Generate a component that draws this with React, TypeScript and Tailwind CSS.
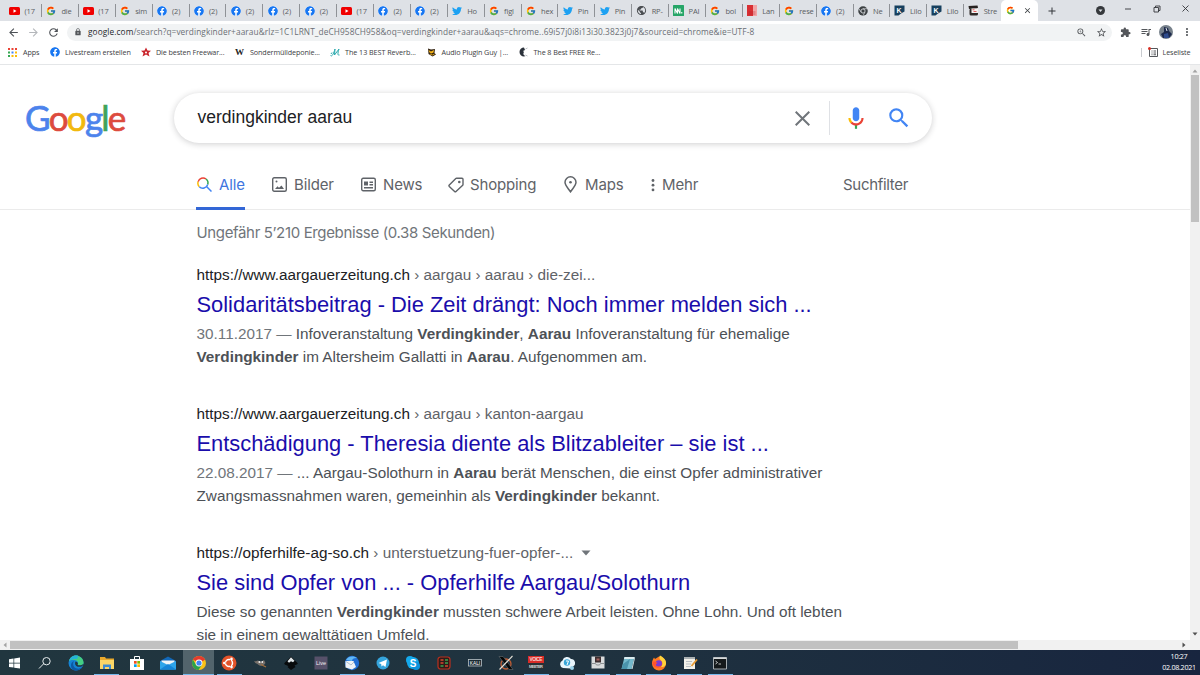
import React from "react";
import { FaFacebook, FaTwitter } from "react-icons/fa";
import { FcGoogle } from "react-icons/fc";
import {
  MdArrowBack,
  MdArrowForward,
  MdRefresh,
  MdLock,
  MdZoomIn,
  MdStarBorder,
  MdExtension,
  MdQueueMusic,
  MdMoreVert,
  MdClose,
  MdAdd,
  MdPublic,
} from "react-icons/md";

const Facebook = ({ size = 10 }: { size?: number }) => (
  <span className="flex rounded-full bg-white">
    <FaFacebook size={size} color="#1877f2" />
  </span>
);

const YouTube = () => (
  <svg width="11" height="8" viewBox="0 0 22 16">
    <rect width="22" height="16" rx="3" fill="#f00000" />
    <path d="M9 4.500v7l6-3.500z" fill="#fff" />
  </svg>
);

const MonoChrome = () => (
  <svg width="10" height="10" viewBox="0 0 20 20">
    <circle cx="10" cy="10" r="9.500" fill="#3c4043" />
    <circle cx="10" cy="10" r="4.200" fill="#3c4043" stroke="#e3e6ea" strokeWidth="1.600" />
    <path d="M10 5.500h8.500M6.200 12.500L2 5.500M13.800 12.500L10 19.500" stroke="#e3e6ea" strokeWidth="1.300" />
  </svg>
);

const KSite = () => (
  <svg width="11" height="11" viewBox="0 0 22 22">
    <path d="M1 1h20v12l-7 4-5 4H1z" fill="#17405e" />
    <text x="5" y="15" fontSize="14" fontWeight="700" fontFamily="Liberation Sans" fill="#fff">K</text>
  </svg>
);

const MSite = () => (
  <svg width="11" height="11" viewBox="0 0 22 22">
    <rect width="22" height="22" rx="1" fill="#26a567" />
    <path d="M4 17V7l5 10V7l5 10V7M17.500 14v3" stroke="#fff" strokeWidth="2.200" fill="none" />
  </svg>
);

const RedSite = () => (
  <svg width="10" height="11" viewBox="0 0 20 22">
    <rect width="12" height="22" fill="#d83034" />
    <rect x="12" width="8" height="22" fill="#f2a5a6" />
    <path d="M3 14h14M3 18h14" stroke="#b92328" strokeWidth="1" />
  </svg>
);

const StreamSite = () => (
  <svg width="11" height="11" viewBox="0 0 22 22">
    <path d="M1 2l18-1 1 5L2 8z" fill="#26211f" />
    <rect x="3" y="7" width="17" height="14" rx="3" fill="#302a28" />
    <rect x="7" y="7" width="13" height="9" fill="#f4f1f0" />
    <path d="M9 9.500h4M11 13h6" stroke="#d33" strokeWidth="1.500" />
  </svg>
);

const favicons: Record<string, React.ReactNode> = {
  yt: <YouTube />,
  g: <FcGoogle size={10} />,
  fb: <Facebook />,
  tw: <FaTwitter size={10} color="#1da1f2" />,
  web: <MdPublic size={11} color="#4a4d51" />,
  m: <MSite />,
  red: <RedSite />,
  chrome: <MonoChrome />,
  k: <KSite />,
  st: <StreamSite />,
};

const tabs: [string, string][] = [
  ["yt", "(17"], ["g", "die"], ["yt", "(17"], ["g", "sim"],
  ["fb", "(2)"], ["fb", "(2)"], ["fb", "(2)"], ["fb", "(2)"], ["fb", "(2)"],
  ["yt", "(17"], ["fb", "(2)"], ["fb", "(2)"], ["tw", "Ho"], ["g", "figl"],
  ["g", "hex"], ["tw", "Pin"], ["tw", "Pin"], ["web", "RP-"], ["m", "PAI"],
  ["g", "bol"], ["red", "Lan"], ["g", "rese"], ["fb", "(2)"], ["chrome", "Ne"],
  ["k", "Lilo"], ["k", "Lilo"], ["st", "Stre"],
];

function TabStrip() {
  return (
    <div className="flex h-[21px] bg-[#dee1e6] pl-[5px]">
      {tabs.map(([icon, label], i) => (
        <div key={i} className="flex h-[21px] w-[36.9px] shrink-0 items-center">
          <div className="ml-[4px] flex w-[11px] shrink-0 justify-center">{favicons[icon]}</div>
          <div className="ml-[4.5px] w-[13.5px] shrink-0 whitespace-nowrap text-[7.5px] leading-[12px] tracking-[-0.15px] text-[#5a5d62]">
            {label}
          </div>
          {i < 26 && <div className="ml-[3px] h-[13px] w-px bg-[#8f9297]" />}
        </div>
      ))}
      <div className="flex h-[21px] w-[37px] shrink-0 items-center rounded-t-[5px] bg-white">
        <span className="ml-[5px]"><FcGoogle size={9} /></span>
        <span className="ml-[8px]"><MdClose size={9} color="#3c4043" /></span>
      </div>
      <div className="ml-[8px] flex items-center"><MdAdd size={12} color="#33363a" /></div>
      <div className="ml-[38px] flex items-center">
        <svg width="9" height="9" viewBox="0 0 18 18">
          <circle cx="9" cy="9" r="9" fill="#35383c" />
          <path d="M5 7h8l-4 5z" fill="#dee1e6" />
        </svg>
      </div>
      <svg className="ml-[20px] mt-[3px]" width="66" height="12" viewBox="0 0 66 12" fill="none" stroke="#33363a" strokeWidth="0.900">
        <path d="M0 6h6M29 4.500h4.500v4.500H29zM30.500 4.500V3h4.500v4.500h-1.500M57.500 2.500l6 6M63.500 2.500l-6 6" />
      </svg>
    </div>
  );
}

function Toolbar() {
  return (
    <div className="flex h-[22px] w-full items-center bg-white">
      <span className="ml-[7px]"><MdArrowBack size={13} color="#4d5156" /></span>
      <span className="ml-[7px]"><MdArrowForward size={13} color="#b4b7bb" /></span>
      <span className="ml-[7px]"><MdRefresh size={13} color="#4d5156" /></span>
      <div className="ml-[7px] flex h-[17px] w-[1045px] shrink-0 items-center rounded-full bg-[#f1f3f4]">
        <span className="ml-[7px]"><MdLock size={8} color="#54575b" /></span>
        <span className="ml-[6px] whitespace-nowrap text-[8.3px] leading-[12px] tracking-[0.085px] text-[#6b6f74]">
          <span className="text-[#26282c]">google.com</span>
          /search?q=verdingkinder+aarau&amp;rlz=1C1LRNT_deCH958CH958&amp;oq=verdingkinder+aarau&amp;aqs=chrome..69i57j0i8i13i30.3823j0j7&amp;sourceid=chrome&amp;ie=UTF-8
        </span>
        <span className="ml-auto"><MdZoomIn size={11} color="#54575b" /></span>
        <span className="ml-[9px] mr-[5px]"><MdStarBorder size={11} color="#54575b" /></span>
      </div>
      <span className="ml-[8px]"><MdExtension size={11} color="#54575b" /></span>
      <span className="ml-[9px]"><MdQueueMusic size={12} color="#54575b" /></span>
      <svg className="ml-[7px] shrink-0" width="14" height="14" viewBox="0 0 14 14">
        <circle cx="7" cy="7" r="7" fill="#77818b" />
        <path d="M5 2l4 1 1 3 3 3-3 4H4L2 9l3-2z" fill="#1d2a4c" />
        <path d="M5 9l4-1 1 5H5z" fill="#2f4b8c" />
        <path d="M7 3l1 3" stroke="#dfe5ea" />
      </svg>
      <span className="ml-[8px]"><MdMoreVert size={12} color="#54575b" /></span>
    </div>
  );
}

const RedStar = () => (
  <svg width="10" height="10" viewBox="0 0 20 20">
    <path d="M10 1l3 6 7 .5-5 4.500 2 7-7-4-7 4 2-7-5-4.500L7 7z" fill="#c9252c" />
    <circle cx="10" cy="11" r="2" fill="#fff" />
  </svg>
);

function Bookmarks() {
  return (
    <div className="flex h-[22px] items-center border-b border-[#e4e6e8] bg-white pb-[3px] text-[7.2px] leading-[12px] tracking-[-0.1px] text-[#3c4043]">
      <svg className="ml-[8px]" width="9" height="9" viewBox="0 0 9 9">
        <path d="M0 0h2v2H0zM3.500 0h2v2h-2zM7 0h2v2H7z" fill="#ea4335" />
        <path d="M0 3.500h2v2H0z" fill="#34a853" />
        <path d="M3.500 3.500h2v2h-2z" fill="#4285f4" />
        <path d="M7 3.500h2v2H7zM3.500 7h2v2h-2zM7 7h2v2H7z" fill="#fbbc05" />
        <path d="M0 7h2v2H0z" fill="#34a853" />
      </svg>
      <span className="ml-[6px] w-[27px] whitespace-nowrap">Apps</span>
      <Facebook />
      <span className="ml-[5px] w-[76px] whitespace-nowrap">Livestream erstellen</span>
      <RedStar />
      <span className="ml-[5px] w-[79px] whitespace-nowrap">Die besten Freewar...</span>
      <span className="w-[11px] font-['Liberation_Serif',serif] text-[9px] font-bold text-[#222]">W</span>
      <span className="ml-[4px] w-[80px] whitespace-nowrap">Sondermülldeponie...</span>
      <svg width="11" height="9" viewBox="0 0 22 18" fill="none" stroke="#29a9ad" strokeWidth="2">
        <path d="M1 15c3 3 6-3 9-13l-1 12L18 2c-2 6-4 14 1 12M4 9l-2 3" />
      </svg>
      <span className="ml-[4px] w-[81.5px] whitespace-nowrap tracking-[-0.05px]">The 13 BEST Reverb...</span>
      <svg width="9" height="9" viewBox="0 0 18 18">
        <path d="M2 1l6 2 8-1-1 8 3 3-7 4-8-5z" fill="#332310" />
        <path d="M3 4l5 3 6-3-1 5-4 2-4-2z" fill="#f6b519" />
        <path d="M6 12l5 2 4-2" stroke="#f6b519" strokeWidth="1.500" fill="none" />
      </svg>
      <span className="ml-[6px] w-[77px] whitespace-nowrap">Audio Plugin Guy |...</span>
      <svg width="9" height="10" viewBox="0 0 18 20">
        <path d="M10 1a9 9 0 100 18l3-1c-5-2-5-5-3-8l-2-2 4-2z" fill="#2b323b" />
        <path d="M13 4l4-2M13 16l4 2" stroke="#bbc0c5" strokeWidth="2" />
      </svg>
      <span className="ml-[6px] w-[607px] whitespace-nowrap">The 8 Best FREE Re...</span>
      <span className="h-[9px] w-px bg-[#c9ccd0]" />
      <svg className="ml-[6px]" width="10" height="10" viewBox="0 0 20 20" fill="none" stroke="#54575b" strokeWidth="2">
        <path d="M3 3h16v16H3zM7 8h2M11 8h5M7 12h2M11 12h5M7 15.500h2M11 15.500h5" />
        <circle cx="3" cy="3" r="3" fill="#d93025" stroke="none" />
      </svg>
      <span className="ml-[5px] whitespace-nowrap">Leseliste</span>
    </div>
  );
}

function Logo() {
  return (
    <div className="flex h-[42px] w-[110px] items-center whitespace-nowrap font-['Lato',sans-serif] text-[35px] leading-[42px] tracking-[-1.8px] [-webkit-text-stroke:0.7px_currentColor]">
      <span className="text-[#4c83ec]">G</span>
      <span className="text-[#dd4b3e]">o</span>
      <span className="text-[#f2b90f]">o</span>
      <span className="text-[#4c83ec]">g</span>
      <span className="text-[#40a35a]">l</span>
      <span className="text-[#dd4b3e]">e</span>
    </div>
  );
}

function SearchBox() {
  return (
    <div className="flex h-[50px] w-[758px] items-center rounded-full bg-white shadow-[0_1px_6px_rgba(32,33,36,0.22)]">
      <span className="ml-[23.5px] w-[597.5px] whitespace-nowrap pb-[2px] text-[17.5px] text-[#202124]">verdingkinder aarau</span>
      <svg width="15" height="15" viewBox="0 0 15 15" stroke="#70757a" strokeWidth="2">
        <path d="M0.700 0.700l13.600 13.600M14.300 0.700L0.700 14.300" />
      </svg>
      <span className="ml-[19px] h-[34px] w-px bg-[#dfe1e5]" />
      <svg className="ml-[13px]" width="26" height="26" viewBox="0 0 24 24">
        <path fill="#4285f4" d="m12 15c1.66 0 3-1.31 3-2.97v-7.02c0-1.66-1.34-3.01-3-3.01s-3 1.34-3 3.01v7.02c0 1.66 1.34 2.97 3 2.97z" />
        <path fill="#34a853" d="m11 18.08h2v3.92h-2z" />
        <path fill="#fbbc05" d="m7.05 16.87c-1.27-1.33-2.05-2.83-2.05-4.87h2c0 1.45 0.56 2.42 1.47 3.38v0.32l-1.15 1.18z" />
        <path fill="#ea4335" d="m12 16.93a4.97 5.25 0 0 1 -3.54 -1.55l-1.41 1.49c1.26 1.34 3.02 2.13 4.95 2.13 3.87 0 6.99-2.92 6.99-7h-1.99c0 2.92-2.24 4.93-5 4.93z" />
      </svg>
      <svg className="ml-[17px]" width="26" height="26" viewBox="0 0 24 24">
        <path fill="#4285f4" d="M15.5 14h-.79l-.28-.27A6.471 6.471 0 0 0 16 9.5 6.5 6.5 0 1 0 9.5 16c1.61 0 3.09-.59 4.23-1.57l.27.28v.79l5 4.99L20.490 19l-4.990-5zm-6 0C7.010 14 5 11.990 5 9.500S7.010 5 9.500 5 14 7.010 14 9.500 11.990 14 9.500 14z" />
      </svg>
    </div>
  );
}

function Nav() {
  const label = "ml-[7px] whitespace-nowrap";
  return (
    <nav className="ml-[196px] flex h-[49px] font-['Inter',sans-serif] text-[15px] leading-[20px] tracking-[-0.15px] text-[#5f6368]">
      <div className="flex w-[49px] items-center border-b-[3px] border-[#3367d6] pt-[1px] text-[#3f76e0]">
        <svg className="ml-[1px] shrink-0" width="15" height="15" viewBox="0 0 15 15" fill="none" strokeWidth="1.500">
          <path d="M2.300 9.700A5 5 0 011.200 4.600" stroke="#fbbc05" />
          <path d="M1.200 4.600A5 5 0 019 2" stroke="#ea4335" />
          <path d="M9 2a5 5 0 011.700 5.500" stroke="#34a853" />
          <path d="M10.700 7.500A5 5 0 012.300 9.700M9.500 9.500l5 5" stroke="#4285f4" />
        </svg>
        <span className={label}>Alle</span>
      </div>
      <div className="ml-[27px] flex w-[89px] items-center pb-[2px]">
        <svg width="15" height="15" viewBox="0 0 15 15" fill="none" stroke="#5f6368" strokeWidth="1.400">
          <rect x="0.700" y="0.700" width="13.600" height="13.600" rx="1.500" />
          <path d="M3 12l2.500-2.800 1.500 1.500L9.500 8.500 12 12z" fill="#5f6368" stroke="none" />
          <circle cx="4.500" cy="4.500" r="1" fill="#5f6368" stroke="none" />
        </svg>
        <span className={label}>Bilder</span>
      </div>
      <div className="flex w-[87px] items-center pb-[2px]">
        <svg width="15" height="15" viewBox="0 0 15 15" fill="none" stroke="#5f6368" strokeWidth="1.400">
          <rect x="0.700" y="1.300" width="13.600" height="12.400" rx="1.500" />
          <path d="M3 4.500h4v4H3z" fill="#5f6368" stroke="none" />
          <path d="M8.500 5.200h3.500M8.500 7.800h3.500M3 10.800h9" />
        </svg>
        <span className={label}>News</span>
      </div>
      <div className="flex w-[115px] items-center pb-[2px]">
        <svg width="16" height="16" viewBox="0 0 16 16" fill="none" stroke="#5f6368" strokeWidth="1.400">
          <path d="M8.500 1.300L14 1.300a1 1 0 011 1V7.500a1 1 0 01-.3.700L8 14.500a1 1 0 01-1.400 0L1.300 9.400a1 1 0 010-1.400L7.800 1.600a1 1 0 01.7-.3z" />
          <circle cx="11.300" cy="5" r="1.300" fill="#5f6368" stroke="none" />
        </svg>
        <span className="ml-[6px]">Shopping</span>
      </div>
      <div className="flex w-[87px] items-center pb-[2px]">
        <svg width="15" height="17" viewBox="0 0 15 17" fill="none" stroke="#5f6368" strokeWidth="1.500">
          <path d="M7.500 15.800C5 12 2 9.500 2 6.300a5.500 5.500 0 0111 0c0 3.200-3 5.700-5.500 9.500z" />
          <circle cx="7.500" cy="6.200" r="1.300" fill="#5f6368" stroke="none" />
        </svg>
        <span className={label}>Maps</span>
      </div>
      <div className="flex w-[193px] items-center pb-[2px]">
        <svg width="5" height="14" viewBox="0 0 5 14" fill="#5f6368">
          <circle cx="3" cy="2.500" r="1.400" />
          <circle cx="3" cy="7.200" r="1.400" />
          <circle cx="3" cy="11.900" r="1.400" />
        </svg>
        <span className={label}>Mehr</span>
      </div>
      <div className="flex items-center pb-[2px] tracking-[-0.3px]">Suchfilter</div>
    </nav>
  );
}

interface ResultProps {
  host: string;
  path: string;
  title: string;
  arrow?: boolean;
  children: React.ReactNode;
}

function Result({ host, path, title, arrow, children }: ResultProps) {
  return (
    <article className="h-[139px] shrink-0 whitespace-nowrap">
      <div className="flex h-[20px] items-center text-[15.31px] leading-[20px] text-[#202124]">
        {host}
        <span className="whitespace-pre text-[#5f6368]"> › {path}</span>
        {arrow && (
          <svg className="ml-[8px]" width="10" height="6" viewBox="0 0 10 6">
            <path d="M0.500 0.500h9L5 5.500z" fill="#70757a" />
          </svg>
        )}
      </div>
      <h3 className="mt-[5px] text-[21.88px] leading-[30px] text-[#1a0dab]">{title}</h3>
      <div className="mt-[1.500px] text-[15.31px] leading-[23.75px] text-[#4d5156]">{children}</div>
    </article>
  );
}

function Page() {
  return (
    <main className="flex h-[575px] w-[1190px] flex-col overflow-hidden bg-white font-['Liberation_Sans',Arial,sans-serif]">
      <div className="h-[145px] shrink-0 border-b border-[#ebebeb]">
        <div className="flex h-[96px] items-start">
          <div className="ml-[25px] mt-[30.5px] w-[149px]"><Logo /></div>
          <div className="mt-[28px]"><SearchBox /></div>
        </div>
        <Nav />
      </div>
      <div className="ml-[196.5px] flex flex-col">
        <div className="mb-[22px] mt-[13px] h-[20px] whitespace-nowrap font-['Inter',sans-serif] text-[15px] leading-[20px] tracking-[-0.35px] text-[#70757a]">
          Ungefähr 5’210 Ergebnisse (0.38 Sekunden)
        </div>
        <Result host="https://www.aargauerzeitung.ch" path="aargau › aarau › die-zei..." title="Solidaritätsbeitrag - Die Zeit drängt: Noch immer melden sich ...">
          <p><span className="text-[#70757a]">30.11.2017 — </span>Infoveranstaltung <b>Verdingkinder</b>, <b>Aarau</b> Infoveranstaltung für ehemalige</p>
          <p><b>Verdingkinder</b> im Altersheim Gallatti in <b>Aarau</b>. Aufgenommen am.</p>
        </Result>
        <Result host="https://www.aargauerzeitung.ch" path="aargau › kanton-aargau" title="Entschädigung - Theresia diente als Blitzableiter – sie ist ...">
          <p><span className="text-[#70757a]">22.08.2017 — </span>... Aargau-Solothurn in <b>Aarau</b> berät Menschen, die einst Opfer administrativer</p>
          <p>Zwangsmassnahmen waren, gemeinhin als <b>Verdingkinder</b> bekannt.</p>
        </Result>
        <Result host="https://opferhilfe-ag-so.ch" path="unterstuetzung-fuer-opfer-..." arrow title="Sie sind Opfer von ... - Opferhilfe Aargau/Solothurn">
          <p>Diese so genannten <b>Verdingkinder</b> mussten schwere Arbeit leisten. Ohne Lohn. Und oft lebten</p>
          <p>sie in einem gewalttätigen Umfeld.</p>
        </Result>
      </div>
    </main>
  );
}

const taskIcons: { icon: React.ReactNode; open?: boolean; active?: boolean }[] = [
  { icon: <path d="M3 4.200l4.500-.7v4.200H3zM8.200 3.400L14 2.600v5.100H8.200zM3 8.400h4.500v4.200L3 11.900zM8.200 8.400H14v5.100l-5.800-.8z" transform="translate(-1 0)" fill="#fff" /> },
  { icon: <path d="M8.200 8.200L3.500 13M11 9.400a3.700 3.700 0 100-7.400 3.700 3.700 0 000 7.400z" transform="translate(-1.500 .5)" fill="none" stroke="#e8eef0" strokeWidth="1" /> },
  {
    icon: (
      <g>
        <circle cx="8" cy="8" r="7.500" fill="#1583d5" />
        <path d="M1 6C2.500 1 7-.2 10.500.9 14.500 2.300 16 6 15.500 8.500c-.5 2-3.500 2.500-6 1.500 1-1 1-4-2-4.700C5 4.700 2.500 5 1 6z" fill="#44cf83" />
        <path d="M1 6C2.500 1 7-.2 10.500.9L9 4C6 4 3 4.500 1 6z" fill="#25b3d8" />
        <path d="M6 6c-2 3-.5 7 3 7.500 2 .5 4-.5 5-1.500-2 4-7 4.500-10 2C2 11 3 7 6 6z" fill="#0c59a4" />
        <path d="M7.500 6.500c-1 2-.2 4 1.500 5 1.500.6 4 .5 5.500-.6l1-2c-2 1.500-4 1.600-6 1 1-1 .4-3-2-3.400z" fill="#213841" />
      </g>
    ),
  },
  {
    open: true,
    icon: (
      <g>
        <path d="M1 2h5l1 1.500h8V14H1z" fill="#e9a92c" />
        <path d="M1 5h14v9H1z" fill="#fbd667" />
        <path d="M4 14V9.500h8V14h-2v-2H6v2z" fill="#3f8bd0" />
      </g>
    ),
  },
  {
    icon: (
      <g>
        <path d="M5.500 4V1.500h5V4" fill="none" stroke="#fff" strokeWidth="1" />
        <path d="M1 4h14v11H1z" fill="#fff" />
        <path d="M5 6h2.700v2.700H5z" fill="#f25022" />
        <path d="M8.300 6H11v2.700H8.300z" fill="#7fba00" />
        <path d="M5 9.300h2.700V12H5z" fill="#00a4ef" />
        <path d="M8.300 9.300H11V12H8.300z" fill="#ffb900" />
      </g>
    ),
  },
  {
    icon: (
      <g>
        <path d="M0 6l8-4.500L16 6v8.500H0z" fill="#1268b8" />
        <path d="M1.500 5.500h13v5h-13z" fill="#eef4f8" />
        <path d="M0 6l8 4 8-4v8.500H0z" fill="#2ea5ea" />
        <path d="M0 14.500l8-5.500 8 5.500z" fill="#1585d8" />
      </g>
    ),
  },
  {
    active: true,
    open: true,
    icon: (
      <g>
        <circle cx="8" cy="8" r="7" fill="#fbc116" />
        <path d="M8 8L1.900 4.600A7 7 0 0114.100 4.600z" fill="#e33b2e" />
        <path d="M1.900 4.600A7 7 0 007.500 15L11 9.700 5 9.700z" fill="#2ba24c" />
        <path d="M14.100 4.600H8v3.400z" fill="#e33b2e" />
        <circle cx="8" cy="8" r="3.400" fill="#fff" />
        <circle cx="8" cy="8" r="2.600" fill="#4285f4" />
      </g>
    ),
  },
  {
    open: true,
    icon: (
      <g>
        <circle cx="8" cy="8" r="7.500" fill="#e3532a" />
        <circle cx="8" cy="8" r="3.500" fill="none" stroke="#fff" strokeWidth="1.500" />
        <path d="M8 8L4 8M8 8l2.500-4.500M8 8l2.500 4.500" stroke="#e3532a" strokeWidth="1" />
        <circle cx="3.300" cy="8" r="1.300" fill="#fff" />
        <circle cx="10.500" cy="3.900" r="1.300" fill="#fff" />
        <circle cx="10.500" cy="12.100" r="1.300" fill="#fff" />
      </g>
    ),
  },
  {
    icon: (
      <g>
        <path d="M2 6c2 1 2-.5 4-.5L9 7l3-2 1.500 3c-2 3.500-6 3.500-8 1-1.500-.5-3-1.500-3.500-3z" fill="#77706a" />
        <circle cx="7.500" cy="7" r="1.100" fill="#eee" />
        <circle cx="10.300" cy="7" r=".9" fill="#eee" />
        <path d="M9 9.500l5 2.500" stroke="#a4703d" strokeWidth="1.100" />
      </g>
    ),
  },
  {
    icon: (
      <g>
        <path d="M8 1.500l6.500 6.500c1 1.500-2 1.500-3 2.500l1 1.500L8 15l-3.500-3 1-1C3 10 .5 9.500 1.500 8z" fill="#080b0d" />
        <path d="M8 2.300l3.500 3.500-1.500 1.500-2-1-2 1.500-1.500-1.500z" fill="#dfe5e8" />
      </g>
    ),
  },
  {
    icon: (
      <g>
        <path d="M1.500 1.500h13v13h-13z" fill="#57516a" />
        <text x="8" y="10" textAnchor="middle" fontSize="5.500" fontFamily="Liberation Sans" fill="#f2eff5">Live</text>
      </g>
    ),
  },
  {
    open: true,
    icon: (
      <g>
        <circle cx="8" cy="8" r="7.200" fill="#1f6ed4" />
        <path d="M2 5c2-4 8-4.500 11-2-3-.2-5 1-5 3z" fill="#62b8f5" />
        <path d="M1.500 6l8 0 2.500 6-4 2.500-6.500-2z" fill="#eef2f6" />
        <path d="M2 6.500l5 3.500 3-3" fill="none" stroke="#9eb0c4" strokeWidth=".8" />
      </g>
    ),
  },
  {
    icon: (
      <g>
        <circle cx="8" cy="8" r="6.500" fill="#34a4dc" />
        <path d="M3.500 8l8.500-3.500-1.500 7.500-2.500-1.800L6.500 11.500 6.200 9z" fill="#fff" />
      </g>
    ),
  },
  {
    icon: (
      <g>
        <circle cx="8" cy="8" r="6" fill="#14a9ec" />
        <circle cx="5" cy="5" r="4" fill="#14a9ec" />
        <circle cx="11" cy="11" r="4" fill="#0d93dc" />
        <text x="8" y="11.500" textAnchor="middle" fontSize="10" fontWeight="700" fontFamily="Liberation Sans" fill="#fff">S</text>
      </g>
    ),
  },
  {
    icon: (
      <g>
        <rect x="2" y="2" width="12" height="12" rx="2.500" fill="#2d1c19" stroke="#b9301f" strokeWidth="1.200" />
        <path d="M4.500 5h3M4.500 8h3M9 11h3" stroke="#d5472f" strokeWidth="1.700" />
        <path d="M9 5h3M9 8h3M4.500 11h3" stroke="#3ea24e" strokeWidth="1.700" />
      </g>
    ),
  },
  {
    icon: (
      <g>
        <rect x="1.500" y="4.500" width="13" height="6.500" fill="#1b2b33" stroke="#b9c3c8" strokeWidth=".8" />
        <text x="8" y="9.600" textAnchor="middle" fontSize="4.800" fontFamily="Liberation Sans" fill="#fff">KALI</text>
      </g>
    ),
  },
  {
    icon: (
      <g>
        <circle cx="8" cy="9" r="5" fill="none" stroke="#c05c33" strokeWidth="1.300" />
        <path d="M1 1.500h4L15 14.500h-4z" fill="#050505" stroke="#8d9498" strokeWidth=".4" />
        <path d="M14.500 1L1.500 14.500" stroke="#e7e2d8" strokeWidth="1.100" />
      </g>
    ),
  },
  {
    open: true,
    icon: (
      <g>
        <path d="M0 1h16v7H0z" fill="#d92c27" />
        <text x="8" y="6.300" textAnchor="middle" fontSize="4.800" fontWeight="700" fontFamily="Liberation Sans" fill="#f5d5d3" textLength="13">VOICE</text>
        <path d="M0 8h16v6H0z" fill="#2a3034" />
        <text x="8" y="12.800" textAnchor="middle" fontSize="4" fontWeight="700" fontFamily="Liberation Sans" fill="#d2d4d5" textLength="14">MEETER</text>
      </g>
    ),
  },
  {
    icon: (
      <g>
        <path d="M4 13a4 4 0 01-.5-7.500A4.800 4.800 0 0112 4a4 4 0 012 7.500l-2 2z" fill="#e9f5fb" />
        <circle cx="8" cy="7.500" r="3.200" fill="#3aa7d8" />
        <path d="M7 6h2.500L8 10" stroke="#fff" fill="none" />
        <circle cx="13" cy="13" r="2" fill="#9bd2ea" />
      </g>
    ),
  },
  {
    open: true,
    icon: (
      <g>
        <path d="M1.500 1.500h13v12h-13z" fill="#d9dbdc" />
        <path d="M5 1.500h6v6H5z" fill="#3d2f30" />
        <path d="M6.500 3.500h3v2h-3z" fill="#a7635e" />
        <path d="M1.500 8.500h4l1 1.500h3l1-1.500h4" fill="none" stroke="#8c9194" />
      </g>
    ),
  },
  {
    open: true,
    icon: (
      <g>
        <path d="M4.500 2h10l-3 12h-10z" fill="#75b9cc" />
        <path d="M4.500 2h10l-.5 2H4z" fill="#dcecf0" />
        <path d="M14.500 2l.5 1-2.500 11h-1z" fill="#d9e6e9" />
        <path d="M3 9l7-5-3 10H1.500z" fill="#4a93ab" />
      </g>
    ),
  },
  {
    open: true,
    icon: (
      <g>
        <path d="M8 1.500c4 0 7 3 7 7a7 7 0 01-14 0c0-3 1-4 2-6l1 1.500z" fill="#ff7a22" />
        <path d="M9 .5c4 2 6.500 5 6 8.500-1 3-3 3-5 3 2-2 2-5 0-6.500C8 4 8 2 9 .5z" fill="#ffd23c" />
        <circle cx="7.800" cy="8.500" r="3.200" fill="#7a3bd0" />
        <path d="M1.500 7c2-1 4 0 5 1-1 1-2 1-2 2 1 2 4 2 6 0-1 4-9 4-9-3z" fill="#ff5130" />
      </g>
    ),
  },
  {
    open: true,
    icon: (
      <g>
        <path d="M2 3h11v11H2z" fill="#f3f1ea" />
        <path d="M2 2h11v2H2z" fill="#aab0b2" />
        <path d="M4 6.500h6M4 9h5M4 11.500h5" stroke="#a9b3b9" strokeWidth=".8" />
        <path d="M15 4.500L9.500 11" stroke="#e79a32" strokeWidth="1.800" />
      </g>
    ),
  },
  {
    open: true,
    icon: (
      <g>
        <path d="M1.500 2.500h13v11.500h-13z" fill="#14191b" stroke="#b6bcc0" strokeWidth=".9" />
        <path d="M1.500 2.500h13v1.500h-13z" fill="#d5d9db" />
        <path d="M3.500 6l2 1.500-2 1.500M6.500 9h2.500" fill="none" stroke="#e8eaeb" strokeWidth=".8" />
      </g>
    ),
  },
];

function Taskbar() {
  return (
    <footer className="flex h-[25px] bg-linear-to-r from-[#21363f] via-[#1f323f] to-[#18253f]">
      {taskIcons.map(({ icon, open, active }, i) => (
        <div key={i} className={`flex h-[25px] w-[30.7px] shrink-0 flex-col items-center justify-between ${i === 0 ? "ml-[-0.8px]" : ""} ${active ? "bg-[#52646c]" : ""}`}>
          <svg className="mt-[4.5px]" width="16" height="16" viewBox="0 0 16 16">{icon}</svg>
          {open && <div className={active ? "h-[1.5px] w-full bg-[#76b9ed]" : "h-[1.5px] w-[25px] bg-[#76b9ed]"} />}
        </div>
      ))}
      <div className="ml-auto mr-[2px] flex w-[38px] flex-col items-center pt-[1px] text-[7.2px] leading-[11px] tracking-[-0.3px] text-white">
        <span>10:27</span>
        <span>02.08.2021</span>
      </div>
    </footer>
  );
}

export default function App() {
  return (
    <div className="flex h-[675px] w-[1200px] flex-col overflow-hidden bg-white font-['Open_Sans','Noto_Sans',sans-serif]">
      <TabStrip />
      <Toolbar />
      <Bookmarks />
      <div className="flex h-[575px]">
        <Page />
        <div className="flex w-[10px] flex-col items-center bg-[#f1f1f1]">
          <svg className="mt-[4px]" width="6" height="4" viewBox="0 0 6 4"><path d="M0.500 3.500h5L3 0.500z" fill="#a3a3a3" /></svg>
          <div className="mt-[2px] h-[147px] w-[8px] bg-[#c1c1c1]" />
          <svg className="mb-[4px] mt-auto" width="6" height="4" viewBox="0 0 6 4"><path d="M0.500 0.500h5L3 3.500z" fill="#505050" /></svg>
        </div>
      </div>
      <div className="flex h-[10px] shrink-0 items-center bg-[#f1f1f1]">
        <svg className="ml-[3px]" width="4" height="6" viewBox="0 0 4 6"><path d="M3.500 0.500v5L0.500 3z" fill="#a3a3a3" /></svg>
        <div className="ml-[3px] h-[8px] w-[1008px] bg-[#c1c1c1]" />
        <svg className="ml-auto mr-[14px]" width="4" height="6" viewBox="0 0 4 6"><path d="M0.500 0.500v5L3.500 3z" fill="#505050" /></svg>
      </div>
      <Taskbar />
    </div>
  );
}
